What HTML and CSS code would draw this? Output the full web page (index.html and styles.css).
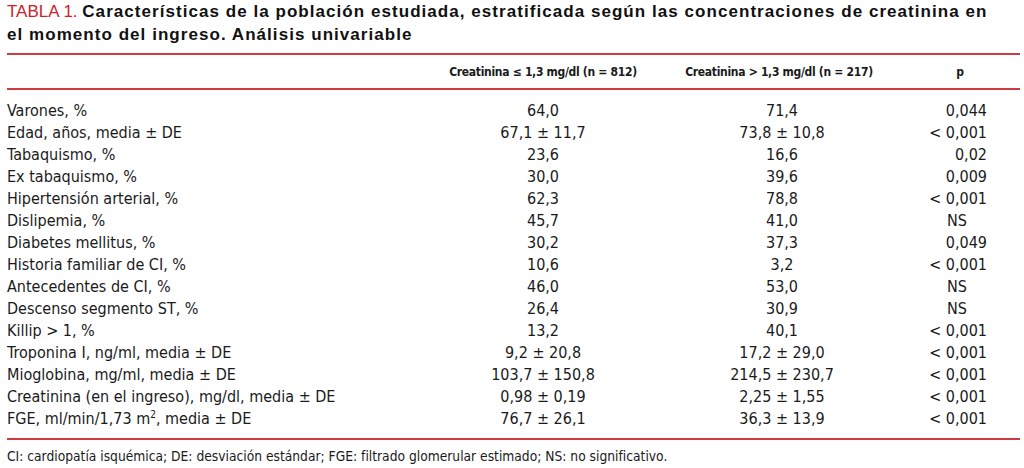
FILE: index.html
```html
<!DOCTYPE html>
<html lang="es">
<head>
<meta charset="utf-8">
<title>Tabla 1</title>
<link rel="stylesheet" href="styles.css">
</head>
<body>
<div class="page">
  <h1 class="title"><span class="label">TABLA 1.</span> <span class="caption">Características de la población estudiada, estratificada según las concentraciones de creatinina en el momento del ingreso. Análisis univariable</span></h1>
  <table class="data">
    <colgroup>
      <col class="c-label">
      <col class="c-a">
      <col class="c-b">
      <col class="c-p">
    </colgroup>
    <thead>
      <tr>
        <th></th>
        <th class="h-a">Creatinina ≤ 1,3 mg/dl (n = 812)</th>
        <th class="h-b">Creatinina &gt; 1,3 mg/dl (n = 217)</th>
        <th class="h-p">p</th>
      </tr>
    </thead>
    <tbody>
      <tr class="first"><td>Varones, %</td><td class="v-a">64,0</td><td class="v-b">71,4</td><td class="v-p">0,044</td></tr>
      <tr><td>Edad, años, media ± DE</td><td class="v-a">67,1 ± 11,7</td><td class="v-b">73,8 ± 10,8</td><td class="v-p">&lt; 0,001</td></tr>
      <tr><td>Tabaquismo, %</td><td class="v-a">23,6</td><td class="v-b">16,6</td><td class="v-p">0,02</td></tr>
      <tr><td>Ex tabaquismo, %</td><td class="v-a">30,0</td><td class="v-b">39,6</td><td class="v-p">0,009</td></tr>
      <tr><td>Hipertensión arterial, %</td><td class="v-a">62,3</td><td class="v-b">78,8</td><td class="v-p">&lt; 0,001</td></tr>
      <tr><td>Dislipemia, %</td><td class="v-a">45,7</td><td class="v-b">41,0</td><td class="v-p ns">NS</td></tr>
      <tr><td>Diabetes mellitus, %</td><td class="v-a">30,2</td><td class="v-b">37,3</td><td class="v-p">0,049</td></tr>
      <tr><td>Historia familiar de CI, %</td><td class="v-a">10,6</td><td class="v-b">3,2</td><td class="v-p">&lt; 0,001</td></tr>
      <tr><td>Antecedentes de CI, %</td><td class="v-a">46,0</td><td class="v-b">53,0</td><td class="v-p ns">NS</td></tr>
      <tr><td>Descenso segmento ST, %</td><td class="v-a">26,4</td><td class="v-b">30,9</td><td class="v-p ns">NS</td></tr>
      <tr><td>Killip &gt; 1, %</td><td class="v-a">13,2</td><td class="v-b">40,1</td><td class="v-p">&lt; 0,001</td></tr>
      <tr><td>Troponina I, ng/ml, media ± DE</td><td class="v-a">9,2 ± 20,8</td><td class="v-b">17,2 ± 29,0</td><td class="v-p">&lt; 0,001</td></tr>
      <tr><td>Mioglobina, mg/ml, media ± DE</td><td class="v-a">103,7 ± 150,8</td><td class="v-b">214,5 ± 230,7</td><td class="v-p">&lt; 0,001</td></tr>
      <tr><td>Creatinina (en el ingreso), mg/dl, media ± DE</td><td class="v-a">0,98 ± 0,19</td><td class="v-b">2,25 ± 1,55</td><td class="v-p">&lt; 0,001</td></tr>
      <tr class="last"><td>FGE, ml/min/1,73 m<sup>2</sup>, media ± DE</td><td class="v-a">76,7 ± 26,1</td><td class="v-b">36,3 ± 13,9</td><td class="v-p">&lt; 0,001</td></tr>
    </tbody>
  </table>
  <p class="note">CI: cardiopatía isquémica; DE: desviación estándar; FGE: filtrado glomerular estimado; NS: no significativo.</p>
</div>
</body>
</html>
```
FILE: styles.css
```css
html, body {
  margin: 0;
  padding: 0;
  background: #ffffff;
}

.page {
  padding: 0 4px 0 7px;
  color: #1a1a1a;
  font-family: "DejaVu Sans Condensed", "DejaVu Sans", sans-serif;
  font-stretch: condensed;
}

.title {
  max-width: 990px;
  margin: 0 0 7px 0;
  font-family: "Liberation Sans", Arial, sans-serif;
  font-stretch: normal;
  font-size: 17px;
  line-height: 23px;
  font-weight: bold;
  color: #111111;
}

.title .label {
  font-weight: normal;
  color: #d0202b;
}

.title .caption {
  letter-spacing: 1.05px;
}

.data {
  width: 100%;
  border-collapse: collapse;
  border-top: 2px solid #cc3a42;
  border-bottom: 2px solid #cc3a42;
  font-size: 16px;
  color: #1a1a1a;
}

.c-label { width: 436px; }
.c-a { width: 200px; }
.c-b { width: 278px; }

.data thead tr {
  border-bottom: 2px solid #cc3a42;
}

.data th {
  height: 33px;
  padding: 0;
  font-size: 12px;
  letter-spacing: -0.3px;
  font-weight: bold;
  text-align: center;
  vertical-align: middle;
  white-space: nowrap;
}

.data .h-b { padding-right: 6px; }
.data .h-p { padding-right: 21px; }

.data td {
  padding: 0;
  height: 22px;
  line-height: 22px;
  white-space: nowrap;
  text-align: left;
}

.data tr.first td { padding-top: 10px; }
.data tr.last td { padding-bottom: 8px; }

.data td.v-a, .data td.v-b { text-align: center; }
.data td.v-p { text-align: right; padding-right: 33px; }
.data td.v-p.ns { text-align: center; padding-right: 27px; }

.data sup {
  font-size: 10px;
  line-height: 0;
  vertical-align: 6px;
}

.note {
  margin: 8px 0 0 0;
  font-size: 13.7px;
  line-height: 16px;
  color: #1a1a1a;
}
```
